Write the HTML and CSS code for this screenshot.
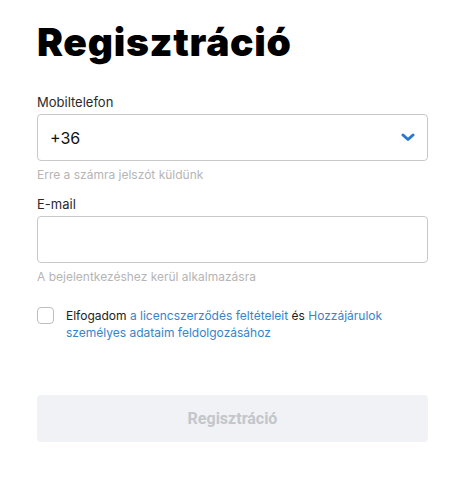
FILE: index.html
```html
<!DOCTYPE html>
<html lang="hu">
<head>
<meta charset="utf-8">
<link rel="stylesheet" href="styles.css">
</head>
<body>
<main class="page">
  <h1 class="title">Regisztráció</h1>
  <form class="form">
    <div class="field">
      <label class="label">Mobiltelefon</label>
      <div class="input select">
        <span class="value">+36</span>
        <svg class="chev" width="14" height="9" viewBox="0 0 14 9"><path d="M2 2 L7 6.5 L12 2" fill="none" stroke="#2b78d0" stroke-width="3" stroke-linecap="round" stroke-linejoin="round"/></svg>
      </div>
      <div class="hint">Erre a számra jelszót küldünk</div>
    </div>
    <div class="field">
      <label class="label">E-mail</label>
      <div class="input"></div>
      <div class="hint">A bejelentkezéshez kerül alkalmazásra</div>
    </div>
    <div class="consent">
      <span class="box"></span>
      <p class="consent-text">Elfogadom <span class="link">a licencszerződés feltételeit</span> és <span class="link">Hozzájárulok</span><br><span class="link">személyes adataim feldolgozásához</span></p>
    </div>
    <button type="button" class="submit">Regisztráció</button>
  </form>
</main>
</body>
</html>
```
FILE: styles.css
```css
html, body { margin: 0; padding: 0; background: #fff; }
body { font-family: "Inter", "Noto Sans", sans-serif; color: #222; }
.page { padding: 20px 28px 0 37px; }
.title {
  margin: 0;
  font-family: "Inter", sans-serif;
  font-weight: 900;
  font-size: 39px;
  line-height: 44px;
  letter-spacing: 0.7px;
  color: #000;
}
.form { margin-top: 30px; }
.field { margin-bottom: 14px; }
.label { display: block; font-size: 13px; line-height: 16px; color: #2a2a2a; margin-bottom: 4px; }
.input {
  box-sizing: border-box;
  height: 47px;
  border: 1px solid #c9c9c9;
  border-radius: 4px;
  display: flex;
  align-items: center;
  padding: 0 12px;
}
.value { font-size: 16px; color: #111; }
.select { justify-content: space-between; }
.chev { display: block; }
.hint { font-size: 12px; line-height: 15px; color: #b5b5b5; margin-top: 6px; }
.consent { display: flex; gap: 12px; margin-top: 23px; }
.box {
  flex: none;
  box-sizing: border-box;
  width: 17px; height: 17px;
  border: 1px solid #bdbdbd;
  border-radius: 4px;
}
.consent-text { margin: 0; font-size: 12px; line-height: 17px; color: #222; }
.link { color: #3784cb; }
.submit {
  display: block;
  width: 100%;
  height: 47px;
  margin-top: 54px;
  border: 0;
  border-radius: 4px;
  background: #f0f2f5;
  color: #c3c6ca;
  font-family: "Roboto", sans-serif;
  font-weight: 700;
  font-size: 16px;
}
```
